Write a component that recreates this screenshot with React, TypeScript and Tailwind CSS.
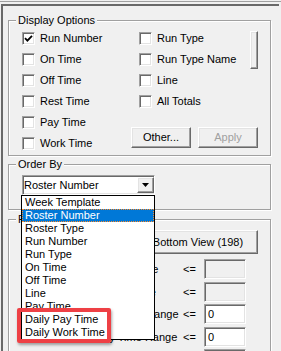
import React from 'react';

const raised =
  'border border-t-white border-l-white border-r-[#696969] border-b-[#696969] bg-[#f0f0f0] shadow-[inset_-1px_-1px_0_#a0a0a0,inset_1px_1px_0_#e3e3e3]';
const sunken =
  'border border-t-[#a0a0a0] border-l-[#a0a0a0] border-r-white border-b-white shadow-[inset_1px_1px_0_#696969,inset_-1px_-1px_0_#e3e3e3]';
const group = 'relative border border-[#a0a0a0] shadow-[inset_1px_1px_0_#fff,1px_1px_0_#fff]';

const leftChecks = [
  { label: 'Run Number', checked: true },
  { label: 'On Time' },
  { label: 'Off Time' },
  { label: 'Rest Time' },
  { label: 'Pay Time' },
  { label: 'Work Time' },
];
const rightChecks = [{ label: 'Run Type' }, { label: 'Run Type Name' }, { label: 'Line' }, { label: 'All Totals' }];

const orderItems = [
  'Week Template',
  'Roster Number',
  'Roster Type',
  'Run Number',
  'Run Type',
  'On Time',
  'Off Time',
  'Line',
  'Pay Time',
  'Daily Pay Time',
  'Daily Work Time',
];

const ranges = [
  { label: 'Spread Time', value: '', disabled: true, mt: 'mt-[5px]' },
  { label: 'Report Time', value: '', disabled: true, mt: 'mt-[3px]' },
  { label: 'Run Time Range', value: '0', mt: 'mt-[2px]' },
  { label: 'Pay Time Range', value: '0', mt: 'mt-[3px]' },
];

function Check({ label, checked }: { label: string; checked?: boolean }) {
  return (
    <div className="flex h-[21px] items-center">
      <span className={`flex h-[13px] w-[13px] shrink-0 items-center justify-center bg-white ${sunken}`}>
        {checked && (
          <svg width="9" height="9" viewBox="0 0 9 9">
            <path d="M1 4.2 L3.4 6.6 L8 1.8" fill="none" stroke="#000" strokeWidth="1.8" />
          </svg>
        )}
      </span>
      <span className="ml-[5px] whitespace-nowrap">{label}</span>
    </div>
  );
}

function GroupLabel({ children }: { children: React.ReactNode }) {
  return <span className="absolute -top-[7px] left-[7px] bg-[#f0f0f0] px-[2px] leading-[13px]">{children}</span>;
}

export default function App() {
  return (
    <div className="relative h-[351px] w-[281px] overflow-hidden bg-[#f0f0f0] pt-px font-['Liberation_Sans',Arial,sans-serif] text-[11px] leading-[13px] text-black">
      <div className="h-px bg-[#a0a0a0]" />
      <div className="ml-px mt-[2px] h-[400px] w-[278px] border-l-2 border-t-2 border-[#696969] pl-[5px] pt-[14px]">
        {/* Display Options */}
        <div className={`${group} h-[136px] w-[263px] pl-[13px] pt-[7px]`}>
          <GroupLabel>Display Options</GroupLabel>
          <div className="flex">
            <div className="w-[109px]">
              {leftChecks.map((c) => (
                <Check key={c.label} label={c.label} checked={c.checked} />
              ))}
            </div>
            <div className="w-[127px]">
              <div className="flex">
                <div className="flex-1 pl-[8px]">
                  {rightChecks.map((c) => (
                    <Check key={c.label} label={c.label} />
                  ))}
                </div>
                <div className={`mt-[3px] h-[38px] w-[8px] ${raised}`} />
              </div>
              <div className="mt-[15px] flex gap-[7px]">
                <button className={`h-[21px] w-[61px] ${raised}`}>Other...</button>
                <button className={`h-[21px] w-[61px] text-[#a0a0a0] ${raised}`}>Apply</button>
              </div>
            </div>
          </div>
        </div>

        {/* Order By */}
        <div className={`${group} mt-[8px] h-[46px] w-[263px] pl-[13px] pt-[10px]`}>
          <GroupLabel>Order By</GroupLabel>
          <div className={`flex h-[20px] w-[133px] items-center bg-white ${sunken}`}>
            <span className="flex-1 pl-[1px]">Roster Number</span>
            <span className={`flex h-[16px] w-[17px] items-center justify-center ${raised}`}>
              <svg width="7" height="4" viewBox="0 0 7 4">
                <path d="M0 0H7L3.5 4Z" fill="#000" />
              </svg>
            </span>
          </div>
        </div>

        {/* Filter group */}
        <div className={`${group} mt-[9px] h-[140px] w-[263px] pl-[13px] pr-[12px] pt-[10px]`}>
          <GroupLabel>Pattern Filter</GroupLabel>
          <div className="flex justify-end">
            <button className={`h-[24px] w-[120px] ${raised}`}>Bottom View (198)</button>
          </div>
          {ranges.map((r) => (
            <div key={r.label} className={`flex h-[20px] items-center pl-[74px] ${r.mt}`}>
              <span className="w-[87px] whitespace-nowrap">{r.label}</span>
              <span className="w-[21px]">&lt;=</span>
              <span
                className={`flex h-[20px] w-[42px] items-center pl-[3px] ${sunken} ${
                  r.disabled ? 'bg-[#f0f0f0]' : 'bg-white'
                }`}
              >
                {r.value}
              </span>
            </div>
          ))}
          <div className="mt-[2px] flex h-[20px] pl-[182px]">
            <span className={`h-[20px] w-[42px] bg-white ${sunken}`} />
          </div>
        </div>
      </div>

      {/* Open drop-down list */}
      <div className="absolute left-[21px] top-[195px] w-[134px] border border-black bg-white">
        {orderItems.map((item, i) => (
          <div
            key={item}
            className={
              i === 1
                ? 'h-[13px] whitespace-nowrap bg-[#0078d7] pl-[3px] leading-[13px] text-white outline outline-1 -outline-offset-1 outline-dotted outline-[#ff8b28]'
                : 'h-[13px] whitespace-nowrap pl-[3px] leading-[13px]'
            }
          >
            {item}
          </div>
        ))}
      </div>

      {/* Highlight annotation */}
      <div className="absolute left-[17px] top-[308px] h-[35px] w-[94px] rounded-[2px] border-[4px] border-[#ee4045] shadow-[1px_2px_3px_rgba(0,0,0,0.35)]" />
    </div>
  );
}
